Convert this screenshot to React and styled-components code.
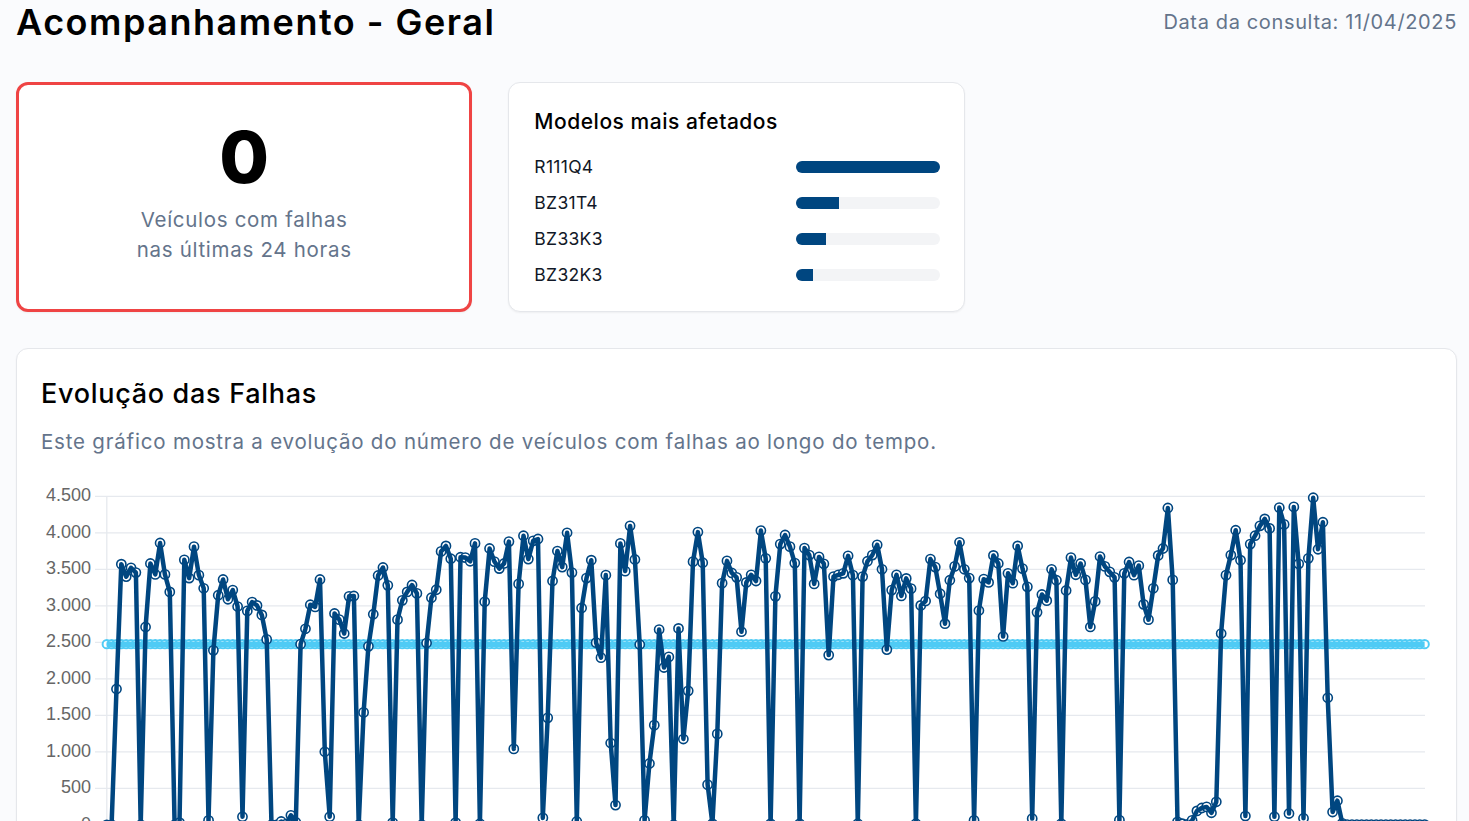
import React from "react";
import styled, { createGlobalStyle } from "styled-components";

const GlobalStyle = createGlobalStyle`
  html, body { margin: 0; padding: 0; height: 100%; overflow: hidden; background: #fafbfd; }
  #root { height: 100%; }
  * { box-sizing: border-box; }
`;

const FONT = `Inter, "Open Sans", sans-serif`;
const NAVY = "#004680";
const CYAN = "#4fcbf5";

const Page = styled.div`
  height: 821px;
  overflow: hidden;
  padding: 2px 12px 0 16px;
  font-family: ${FONT};
`;
const Header = styled.header`
  display: flex;
  justify-content: space-between;
  align-items: center;
  height: 40px;
  margin-bottom: 40px;
`;
const Title = styled.h1`
  margin: 0;
  font-size: 36px;
  font-weight: 600;
  letter-spacing: 1.5px;
  line-height: 40px;
  color: #000;
`;
const DateText = styled.span`
  font-size: 20px;
  letter-spacing: 0.64px;
  color: #64748b;
`;
const TopGrid = styled.div`
  display: grid;
  grid-template-columns: repeat(3, 1fr);
  gap: 36px;
  margin-bottom: 36px;
`;
const Card = styled.section`
  background: #fff;
  border: 1px solid #e5e7eb;
  border-radius: 12px;
  box-shadow: 0 1px 2px rgba(0, 0, 0, 0.05);
`;
const AlertCard = styled(Card)`
  height: 230px;
  border: 3px solid #ef4444;
  display: flex;
  flex-direction: column;
  align-items: center;
  padding-top: 29px;
`;
const BigNumber = styled.div`
  font-size: 72px;
  font-weight: 800;
  line-height: 86px;
  color: #000;
`;
const AlertLabel = styled.p`
  margin: 5px 0 0;
  font-size: 20.5px;
  line-height: 30px;
  letter-spacing: 0.7px;
  text-align: center;
  color: #64748b;
`;
const ModelsCard = styled(Card)`
  height: 230px;
  padding: 24px 24px 0 25px;
`;
const CardHeading = styled.h2`
  margin: 0 0 12px;
  font-size: 21px;
  font-weight: 500;
  line-height: 30px;
  letter-spacing: 0.52px;
  color: #000;
`;
const ModelRow = styled.div`
  display: flex;
  justify-content: space-between;
  align-items: center;
  height: 36px;
`;
const ModelName = styled.span`
  padding-bottom: 2px;
  font-size: 17.5px;
  letter-spacing: 0.3px;
  color: #111827;
`;
const Track = styled.div`
  width: 144px;
  height: 12px;
  border-radius: 6px;
  overflow: hidden;
  background: #f3f4f6;
`;
const Fill = styled.div`
  height: 100%;
  background: ${NAVY};
`;
const ChartCard = styled(Card)`
  height: 600px;
  padding: 28px 24px 0;
`;
const ChartTitle = styled.h2`
  margin: 0;
  font-size: 27px;
  font-weight: 500;
  line-height: 34px;
  letter-spacing: 0.7px;
  color: #000;
`;
const ChartSubtitle = styled.p`
  margin: 16px 0 23px;
  font-size: 20.5px;
  line-height: 30px;
  letter-spacing: 0.8px;
  color: #64748b;
`;
const ChartSvg = styled.svg`
  display: block;
  overflow: visible;
`;
const AxisLabel = styled.text`
  font-family: "Liberation Sans", Arial, sans-serif;
  font-size: 18px;
  fill: #666;
  text-anchor: end;
  dominant-baseline: central;
`;

const models = [
  ["R111Q4", 100],
  ["BZ31T4", 30],
  ["BZ33K3", 21],
  ["BZ32K3", 12],
];

const series = [
  0,0,1860,3570,3400,3520,3455,0,2710,3580,3430,3860,3430,3190,0,30,3630,3380,3810,3420,3240,60,2390,3145,3360,3090,3215,2990,110,2930,
  3050,3005,2875,2540,0,0,45,10,130,35,2475,2685,3015,2985,3360,1000,110,2895,2810,2620,3130,3135,0,1540,2445,2885,3415,3525,3280,30,
  2810,3075,3190,3285,3170,0,2490,3110,3220,3745,3820,3645,30,3665,3660,3610,3855,15,3055,3785,3605,3510,3580,3880,1040,3300,3960,3640,3890,3915,
  95,1465,3340,3750,3530,4000,3455,45,2970,3380,3625,2495,2290,3420,1120,270,3855,3475,4095,3635,2470,60,840,1365,2675,2155,2300,0,2690,1175,
  1835,3605,4010,3590,550,15,1245,3310,3615,3450,3390,2645,3320,3425,3340,4030,3650,15,3130,3845,3970,3810,3585,15,3790,3695,3300,3670,3575,2325,
  3400,3425,3445,3685,3420,15,3400,3610,3695,3835,3500,2400,3215,3425,3135,3375,3235,15,3005,3065,3640,3530,3165,2755,3350,3540,3870,3500,3380,60,
  2935,3365,3320,3690,3580,2580,3445,3310,3820,3510,3260,85,2910,3155,3070,3500,3350,15,3210,3660,3425,3580,3355,2710,3060,3675,3540,3465,3390,65,
  3445,3600,3420,3550,3020,2810,3240,3690,3785,4340,3355,40,15,5,60,190,230,245,165,315,2620,3420,3695,4035,3625,120,3845,3960,4095,4190,
  4060,110,4345,4115,155,4355,3575,90,3650,4480,3775,4145,1740,175,330,20,
  ...Array(17).fill(2),
];

const X0 = 106.8;
const STEP = 4.845;
const xOf = (i) => X0 + i * STEP;
const yOf = (v) => 824.8 - v * 0.073;
const linePoints = series.map((v, i) => `${xOf(i).toFixed(1)},${yOf(v).toFixed(1)}`).join(" ");
const ticks = [0, 500, 1000, 1500, 2000, 2500, 3000, 3500, 4000, 4500];
const TARGET = 2475;

function Chart() {
  const targetY = yOf(TARGET);
  return (
    <ChartSvg width="1391" height="360" viewBox="41 480 1391 360">
      {ticks.map((t) => (
        <g key={t}>
          <line x1="95" x2="1425" y1={yOf(t)} y2={yOf(t)} stroke="#e6e9ee" strokeWidth="1.3" />
          <AxisLabel x="91" y={yOf(t) - 1}>{t === 0 ? "0" : t.toLocaleString("pt-BR")}</AxisLabel>
        </g>
      ))}
      <line x1={X0} x2={X0} y1={yOf(4500)} y2="840" stroke="#e6e9ee" strokeWidth="1.3" />
      {series.map((_, i) => (
        <circle key={i} cx={xOf(i)} cy={targetY} r="4.2" fill="#fff" stroke={CYAN} strokeWidth="2" />
      ))}
      <line x1={X0} x2={xOf(series.length - 1)} y1={targetY} y2={targetY} stroke={CYAN} strokeWidth="5.5" />
      {series.map((v, i) => (
        <circle key={i} cx={xOf(i)} cy={yOf(v)} r="4.6" fill="#fff" stroke={NAVY} strokeWidth="1.6" />
      ))}
      <polyline points={linePoints} fill="none" stroke={NAVY} strokeWidth="4.5" strokeLinejoin="round" />
    </ChartSvg>
  );
}

export default function App() {
  return (
    <Page>
      <GlobalStyle />
      <Header>
        <Title>Acompanhamento - Geral</Title>
        <DateText>Data da consulta: 11/04/2025</DateText>
      </Header>
      <TopGrid>
        <AlertCard>
          <BigNumber>0</BigNumber>
          <AlertLabel>
            Veículos com falhas
            <br />
            nas últimas 24 horas
          </AlertLabel>
        </AlertCard>
        <ModelsCard>
          <CardHeading>Modelos mais afetados</CardHeading>
          {models.map(([name, pct]) => (
            <ModelRow key={name}>
              <ModelName>{name}</ModelName>
              <Track>
                <Fill style={{ width: `${pct}%` }} />
              </Track>
            </ModelRow>
          ))}
        </ModelsCard>
      </TopGrid>
      <ChartCard>
        <ChartTitle>Evolução das Falhas</ChartTitle>
        <ChartSubtitle>
          Este gráfico mostra a evolução do número de veículos com falhas ao longo do tempo.
        </ChartSubtitle>
        <Chart />
      </ChartCard>
    </Page>
  );
}
